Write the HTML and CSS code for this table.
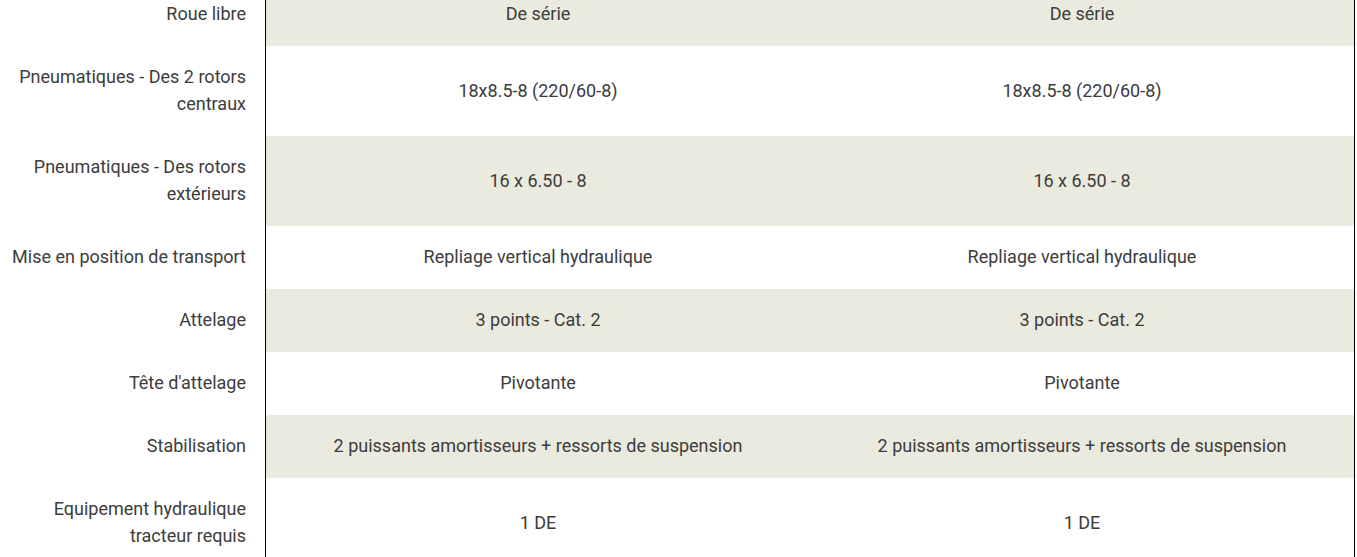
FILE: index.html
```html
<!DOCTYPE html>
<html lang="fr">
<head>
<meta charset="utf-8">
<link rel="stylesheet" href="styles.css">
</head>
<body>
<div class="specs">
  <div class="row alt">
    <div class="label">Roue libre</div>
    <div class="val">De série</div>
    <div class="val last">De série</div>
  </div>
  <div class="row">
    <div class="label">Pneumatiques - Des 2 rotors centraux</div>
    <div class="val">18x8.5-8 (220/60-8)</div>
    <div class="val last">18x8.5-8 (220/60-8)</div>
  </div>
  <div class="row alt">
    <div class="label">Pneumatiques - Des rotors extérieurs</div>
    <div class="val">16 x 6.50 - 8</div>
    <div class="val last">16 x 6.50 - 8</div>
  </div>
  <div class="row">
    <div class="label">Mise en position de transport</div>
    <div class="val">Repliage vertical hydraulique</div>
    <div class="val last">Repliage vertical hydraulique</div>
  </div>
  <div class="row alt">
    <div class="label">Attelage</div>
    <div class="val">3 points - Cat. 2</div>
    <div class="val last">3 points - Cat. 2</div>
  </div>
  <div class="row">
    <div class="label">Tête d'attelage</div>
    <div class="val">Pivotante</div>
    <div class="val last">Pivotante</div>
  </div>
  <div class="row alt">
    <div class="label">Stabilisation</div>
    <div class="val">2 puissants amortisseurs + ressorts de suspension</div>
    <div class="val last">2 puissants amortisseurs + ressorts de suspension</div>
  </div>
  <div class="row">
    <div class="label">Equipement hydraulique tracteur requis</div>
    <div class="val">1 DE</div>
    <div class="val last">1 DE</div>
  </div>
</div>
</body>
</html>
```
FILE: styles.css
```css
html, body {
  margin: 0;
  padding: 0;
  background: #ffffff;
  overflow: hidden;
}
body {
  font-family: Roboto, "Noto Sans", sans-serif;
  font-size: 18px;
  line-height: 27px;
  color: #3c3c3c;
}
.specs {
  margin-top: -17px;
  width: 1355px;
  display: flex;
  flex-direction: column;
}
.row {
  display: grid;
  grid-template-columns: 266px 544px 545px;
}
.label {
  background: #ffffff;
  border-right: 1px solid #000;
  text-align: right;
  padding: 17px 19px 19px 10px;
}
.val {
  text-align: center;
  padding: 17px 10px 19px;
  display: flex;
  align-items: center;
  justify-content: center;
}
.val.last {
  border-right: 1px solid #000;
}
.row.alt .val {
  background: #ebeadf;
}
```
